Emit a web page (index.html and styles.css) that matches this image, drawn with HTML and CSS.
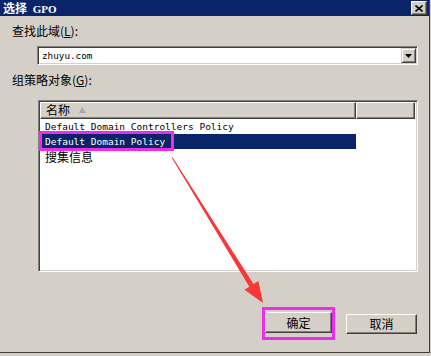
FILE: index.html
```html
<!DOCTYPE html>
<html lang="zh-CN">
<head>
  <meta charset="UTF-8" />
  <title>选择 GPO</title>
  <link rel="stylesheet" href="styles.css">
</head>
<body>
  <div class="window">
    <div class="titlebar">
      <span class="title">选择 <b class="title-latin">GPO</b></span>
      <button class="close-btn" aria-label="关闭">
        <svg width="8" height="7" viewBox="0 0 8 7">
          <path d="M0.5 0.5 L7.5 6.5 M7.5 0.5 L0.5 6.5" stroke="#000" stroke-width="1.6"/>
        </svg>
      </button>
    </div>

    <div class="label label-domain">查找此域(<u>L</u>):</div>
    <div class="combo">
      <span class="combo-text">zhuyu.com</span>
      <span class="combo-btn">
        <svg width="7" height="4" viewBox="0 0 7 4"><path d="M0 0 H7 L3.5 4 Z" fill="#000"/></svg>
      </span>
    </div>

    <div class="label label-gpo">组策略对象(<u>G</u>):</div>
    <div class="listview">
      <div class="list-header">
        <div class="col-head col-name">名称 <span class="sort-arrow">▲</span></div>
        <div class="col-head col-rest"></div>
      </div>
      <div class="row">Default Domain Controllers Policy</div>
      <div class="row row-selected">Default Domain Policy</div>
      <div class="row row-cjk">搜集信息</div>
      <!-- 标注框 -->
      <div class="mark mark-row"></div>
    </div>

    <div class="buttons">
      <span class="mark-btn"><button class="btn">确定</button></span>
      <button class="btn btn-cancel">取消</button>
    </div>

    <!-- 红色箭头标注 -->
    <svg class="arrow" width="431" height="356" viewBox="0 0 431 356">
      <polygon points="171.6,157.6 172.6,157.2 253.5,284.1 258.4,281.0 263,303 244.5,289.7 249.3,286.7" fill="#f83838"/>
    </svg>
  </div>
</body>
</html>
```

FILE: styles.css
```css
body {
    margin: 0;
    background: #d4d0c8;
    font-family: "Noto Sans CJK SC", "Liberation Sans", sans-serif;
    font-size: 12px;
    color: #000;
}

.window {
    position: relative;
    width: 429px;
    height: 352px;
    background: #d4d0c8;
    border-right: 1px solid #404040;
    border-bottom: 1px solid #404040;
    display: flex;
    flex-direction: column;
}

.titlebar {
    height: 16px;
    background: #0a246a;
    color: #fff;
    display: flex;
    align-items: center;
    justify-content: space-between;
    padding: 0 2px 0 3px;
}

.title {
    font-weight: bold;
    font-size: 12px;
    line-height: 16px;
}

.title-latin {
    font-family: "Liberation Serif", serif;
    font-size: 11px;
    margin-left: 3px;
}

.close-btn {
    width: 16px;
    height: 14px;
    padding: 0;
    background: #d4d0c8;
    border: 1px solid;
    border-color: #fff #404040 #404040 #fff;
    box-shadow: inset -1px -1px 0 #808080;
    display: flex;
    align-items: center;
    justify-content: center;
}

.label {
    height: 14px;
    line-height: 14px;
    margin-left: 12px;
}

.label u {
    text-decoration: underline;
}

.label-domain {
    margin-top: 8px;
}

.label-gpo {
    margin-top: 8px;
}

.combo {
    margin: 8px 0 0 37px;
    width: 381px;
    height: 19px;
    box-sizing: border-box;
    background: #fff;
    border: 1px solid;
    border-color: #808080 #fff #fff #808080;
    box-shadow: inset 1px 1px 0 #404040, inset -1px -1px 0 #d4d0c8;
    display: flex;
    align-items: center;
    justify-content: space-between;
    padding: 0 1px 0 4px;
}

.combo-text {
    font-family: "DejaVu Sans Mono", monospace;
    font-size: 9.3px;
}

.combo-btn {
    width: 15px;
    height: 15px;
    box-sizing: border-box;
    background: #d4d0c8;
    border: 1px solid;
    border-color: #d4d0c8 #404040 #404040 #d4d0c8;
    box-shadow: inset 1px 1px 0 #fff, inset -1px -1px 0 #808080;
    display: flex;
    align-items: center;
    justify-content: center;
}

.listview {
    position: relative;
    margin: 13px 0 0 38px;
    width: 380px;
    height: 172px;
    box-sizing: border-box;
    background: #fff;
    border: 1px solid;
    border-color: #808080 #fff #fff #808080;
    box-shadow: inset 1px 1px 0 #404040, inset -1px -1px 0 #d4d0c8;
    padding: 1px 2px 2px 1px;
}

.list-header {
    display: flex;
    height: 17px;
}

.col-head {
    box-sizing: border-box;
    height: 17px;
    background: #d4d0c8;
    border: 1px solid;
    border-color: #fff #404040 #404040 #fff;
    box-shadow: inset -1px -1px 0 #808080;
    line-height: 14px;
    padding-left: 5px;
}

.col-name {
    width: 316px;
}

.col-rest {
    flex: 1;
}

.sort-arrow {
    color: #a8a8a8;
    font-size: 7px;
    margin-left: 6px;
    vertical-align: 2px;
}

.row {
    width: 316px;
    height: 15px;
    line-height: 15px;
    box-sizing: border-box;
    padding-left: 5px;
    font-family: "DejaVu Sans Mono", monospace;
    font-size: 9.5px;
    white-space: nowrap;
}

.row-selected {
    background: #0a246a;
    color: #fff;
}

.row-cjk {
    font-family: "Noto Sans CJK SC", sans-serif;
    font-size: 12px;
}

.mark {
    position: absolute;
    box-sizing: border-box;
    border: 3px solid #ee2cee;
}

.mark-row {
    left: 0;
    top: 30px;
    width: 135px;
    height: 20px;
}

.buttons {
    display: flex;
    align-items: center;
    margin: 35px 0 0 262px;
    gap: 11px;
}

.mark-btn {
    display: inline-flex;
    border: 3px solid #ee2cee;
    padding: 2px 0 4px 0;
}

.btn {
    width: 67px;
    height: 21px;
    padding: 0;
    font-family: "Noto Sans CJK SC", sans-serif;
    font-size: 12px;
    background: #d4d0c8;
    border: 1px solid;
    border-color: #fff #404040 #404040 #fff;
    box-shadow: inset -1px -1px 0 #808080;
}

.btn-cancel {
    width: 71px;
    height: 20px;
}

.arrow {
    position: absolute;
    left: 0;
    top: 0;
    pointer-events: none;
}
```
